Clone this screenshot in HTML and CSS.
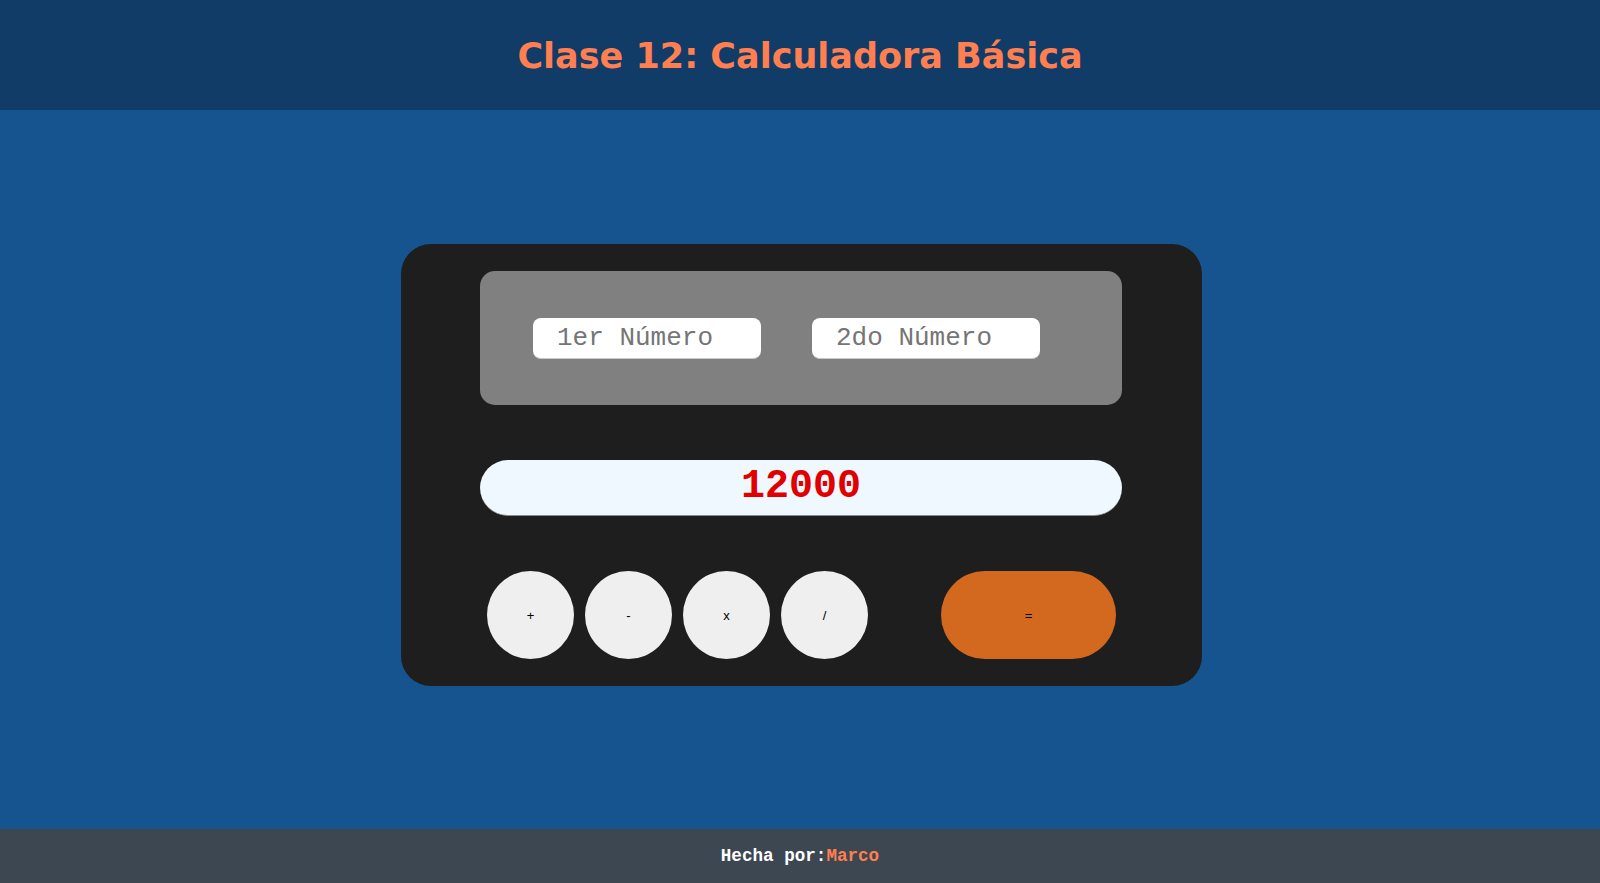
FILE: index.html
```html
<!DOCTYPE html>
<html lang="es">
<head>
  <meta charset="UTF-8" />
  <meta name="viewport" content="width=device-width, initial-scale=1.0"/>
  <title>Clase 12: Calculadora Básica</title>
  <link rel="stylesheet" href="styles.css">
</head>
<body>

  <!-- Header -->
  <header class="top-bar">
    <h1>Clase 12: Calculadora Básica</h1>
  </header>

  <!-- Calculadora -->
  <main class="main">
    <div class="calc">
      <div class="inputs">
        <input type="text" class="num" placeholder="1er Número" />
        <input type="text" class="num" placeholder="2do Número" />
      </div>

      <div class="result">12000</div>

      <div class="keys">
        <button class="key">+</button>
        <button class="key">-</button>
        <button class="key">x</button>
        <button class="key">/</button>
        <button class="key key-equal">=</button>
      </div>
    </div>
  </main>

  <footer class="footer">
    <span>Hecha por:</span><span class="author">Marco</span>
  </footer>

</body>
</html>
```

FILE: styles.css
```css
* {
  margin: 0;
  padding: 0;
  box-sizing: border-box;
}

body {
  height: 100vh;
  display: flex;
  flex-direction: column;
  background: #165490;
}

.top-bar {
  height: 110px;
  background: #113c68;
  display: flex;
  justify-content: center;
  align-items: center;
}

.top-bar h1 {
  font-family: 'DejaVu Sans', Verdana, sans-serif;
  font-weight: bold;
  font-size: 35px;
  color: #ff7f50;
  margin-top: 2px;
}

.main {
  flex: 1;
  display: flex;
  justify-content: center;
  align-items: flex-start;
  padding-top: 134px;
  padding-left: 3px;
}

.calc {
  width: 801px;
  background: #1e1e1e;
  border-radius: 30px;
  padding: 27px 80px 27px 79px;
}

.inputs {
  height: 134px;
  background: #808080;
  border-radius: 15px;
  display: flex;
  align-items: center;
  gap: 51px;
  padding-left: 53px;
}

.num {
  width: 228px;
  height: 41px;
  border: none;
  border-bottom: 1px solid #c8c8c8;
  border-radius: 8px;
  background: white;
  padding-left: 24px;
  font-family: 'Liberation Mono', 'Courier New', monospace;
  font-size: 26px;
  color: #333;
}

.num::placeholder {
  color: #757575;
}

.result {
  margin-top: 55px;
  height: 56px;
  border-radius: 28px;
  background: #f0f8ff;
  border-bottom: 1px solid #8a8a8a;
  display: flex;
  justify-content: center;
  align-items: center;
  font-family: 'Liberation Mono', 'Courier New', monospace;
  font-weight: bold;
  font-size: 40px;
  color: #e00000;
  padding-bottom: 2px;
}

.keys {
  margin-top: 55px;
  display: flex;
  gap: 11px;
  padding-left: 7px;
}

.key {
  width: 87px;
  height: 88px;
  border: none;
  border-radius: 50%;
  background: #efefef;
  font-family: 'Liberation Sans', Arial, sans-serif;
  font-size: 13px;
  color: black;
  cursor: pointer;
}

.key-equal {
  width: 175px;
  border-radius: 44px;
  margin-left: 62px;
  background: #d2691e;
}

.footer {
  height: 54px;
  background: #3d4751;
  display: flex;
  justify-content: center;
  align-items: center;
  font-family: 'Liberation Mono', 'Courier New', monospace;
  font-weight: bold;
  font-size: 17.6px;
  color: white;
}

.footer .author {
  color: #ff7f50;
}
```
